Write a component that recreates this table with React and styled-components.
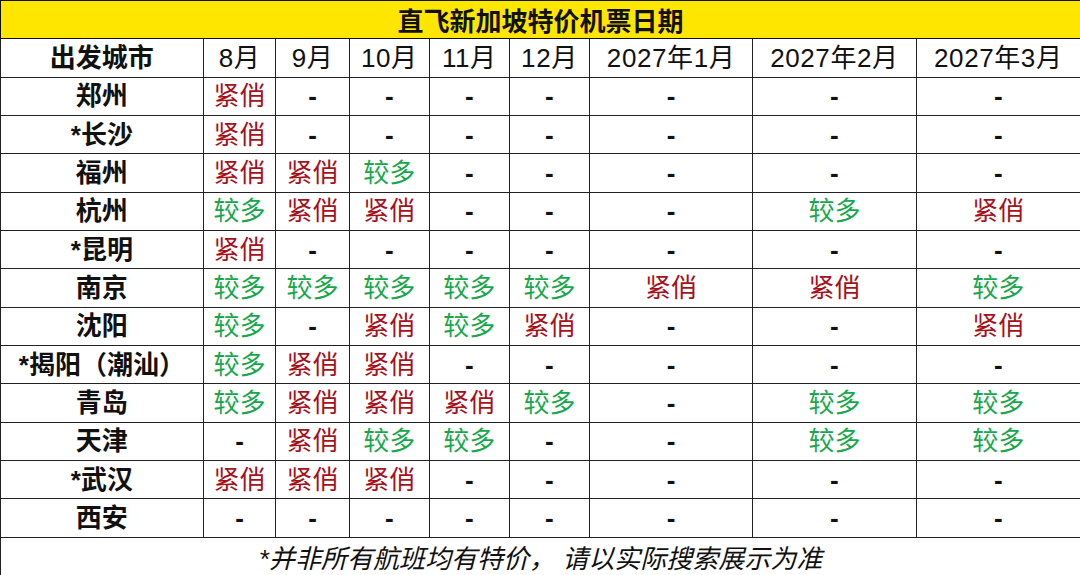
import React from 'react';
import styled, { createGlobalStyle } from 'styled-components';

const GlobalStyle = createGlobalStyle`
  html, body {
    margin: 0;
    padding: 0;
    background: #ffffff;
  }
  body {
    font-family: "Liberation Sans", "Noto Sans CJK SC", sans-serif;
  }
`;

const Table = styled.table`
  width: 1080px;
  height: 575px;
  border-collapse: collapse;
  table-layout: fixed;
  border: 1px solid #111;
`;

const Row = styled.tr`
  height: 38.33px;
`;

const TitleCell = styled.th`
  background: #ffe600;
  color: #111;
  font-size: 26px;
  font-weight: 700;
  text-align: center;
  padding: 0;
  border: 1px solid #111;
`;

const Cell = styled.td`
  border: 1px solid #222;
  padding: 0;
  text-align: center;
  vertical-align: middle;
  font-size: 26px;
  line-height: 1;
  white-space: nowrap;
  letter-spacing: ${(p) => (p.spaced ? '0.6px' : '0')};
  color: ${(p) => (p.tone === 'hot' ? '#a8101a' : p.tone === 'many' ? '#17a84b' : '#111')};
  font-weight: ${(p) => (p.bold || p.tone === 'none' ? 700 : 400)};
`;

const NoteCell = styled.td`
  border: 1px solid #222;
  padding: 0;
  text-align: center;
  font-size: 26px;
  font-style: italic;
  color: #111;
`;

const widths = [202.7, 72.6, 73.7, 79.7, 80.3, 80, 163.3, 163.4, 164.3];

const months = ['8月', '9月', '10月', '11月', '12月', '2027年1月', '2027年2月', '2027年3月'];

// H = 紧俏, M = 较多, - = 无
const rows = [
  ['郑州', 'H-------'],
  ['*长沙', 'H-------'],
  ['福州', 'HHM-----'],
  ['杭州', 'MHH---MH'],
  ['*昆明', 'H-------'],
  ['南京', 'MMMMMHHM'],
  ['沈阳', 'M-HMH--H'],
  ['*揭阳（潮汕）', 'MHH-----'],
  ['青岛', 'MHHHM-MM'],
  ['天津', '-HMM--MM'],
  ['*武汉', 'HHH-----'],
  ['西安', '--------'],
];

const label = { H: '紧俏', M: '较多', '-': '-' };
const tone = { H: 'hot', M: 'many', '-': 'none' };

export default function App() {
  return (
    <>
      <GlobalStyle />
      <Table>
        <colgroup>
          {widths.map((w, i) => (
            <col key={i} style={{ width: w }} />
          ))}
        </colgroup>
        <tbody>
          <Row>
            <TitleCell colSpan={9}>直飞新加坡特价机票日期</TitleCell>
          </Row>
          <Row>
            <Cell bold>出发城市</Cell>
            {months.map((m) => (
              <Cell key={m} spaced>
                {m}
              </Cell>
            ))}
          </Row>
          {rows.map(([city, marks]) => (
            <Row key={city}>
              <Cell bold>{city}</Cell>
              {marks.split('').map((c, i) => (
                <Cell key={i} tone={tone[c]}>
                  {label[c]}
                </Cell>
              ))}
            </Row>
          ))}
          <Row>
            <NoteCell colSpan={9}>*并非所有航班均有特价， 请以实际搜索展示为准</NoteCell>
          </Row>
        </tbody>
      </Table>
    </>
  );
}
